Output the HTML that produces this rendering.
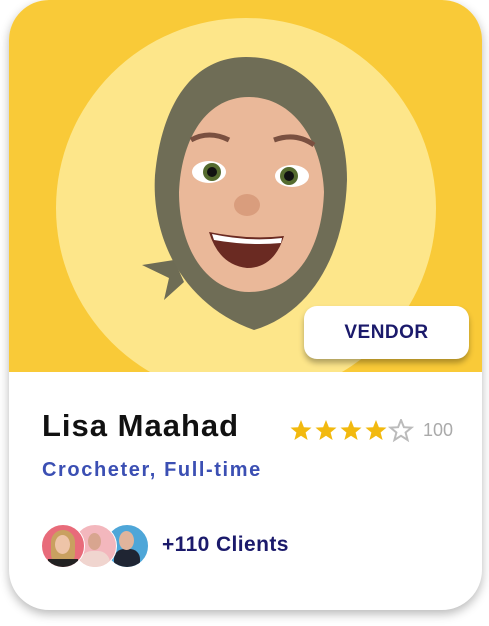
<!DOCTYPE html>
<html><head><meta charset="utf-8"><style>
body{margin:0;width:489px;height:626px;background:#fff;font-family:"Liberation Sans",sans-serif;position:relative;overflow:hidden}
.card{position:absolute;left:9px;top:0;width:473px;height:610px;border-radius:40px;background:#fff;box-shadow:0 4px 10px rgba(0,0,0,.28);overflow:hidden}
.top{position:absolute;left:0;top:0;width:473px;height:372px;background:#f9ca38;overflow:hidden}
.circ{position:absolute;left:47px;top:18px;width:380px;height:380px;border-radius:50%;background:#fde68a}
.vendor{position:absolute;left:295px;top:306px;width:165px;height:53px;border-radius:13px;background:#fff;box-shadow:0 4px 6px rgba(0,0,0,.3);text-align:center;line-height:53px;font-weight:bold;font-size:19px;color:#1b1a6b;letter-spacing:.5px}
.name{position:absolute;left:33px;top:408px;font-size:31px;font-weight:bold;color:#111;letter-spacing:1px}
.sub{position:absolute;left:33px;top:459px;font-size:20px;font-weight:bold;color:#3b4fb3;letter-spacing:1.6px}
.stars{position:absolute;left:281px;top:419px}
.num{position:absolute;left:414px;top:420px;font-size:18px;color:#aaa}
.av{position:absolute;top:524px;width:42px;height:42px;border-radius:50%;border:1px solid #fff;overflow:hidden}
.cl{position:absolute;left:153px;top:533px;font-size:21px;font-weight:bold;color:#1b1a6b;letter-spacing:.4px}
</style></head><body>
<div class="card">
<div class="top"><div class="circ"></div>
<svg width="473" height="372" style="position:absolute;left:0;top:0">
<path d="M133 265 L165 260 L175 282 L155 300 L160 278 Z" fill="#6e6c55"/>
<path d="M237 57 C180 57 152 110 146 175 C142 240 175 305 245 330 C305 312 336 250 338 180 C338 110 300 57 237 57Z" fill="#6f6d56"/>
<path d="M240 97 C195 97 172 142 170 192 C170 252 200 292 240 292 C285 292 313 252 315 192 C313 142 285 97 240 97Z" fill="#eab899"/>
<path d="M182 140 Q200 130 220 140" stroke="#7a5040" stroke-width="5" fill="none"/>
<path d="M265 140 Q287 132 305 145" stroke="#7a5040" stroke-width="5" fill="none"/>
<ellipse cx="200" cy="172" rx="17" ry="11" fill="#fff"/><circle cx="203" cy="172" r="9" fill="#556b2f"/><circle cx="203" cy="172" r="5" fill="#111"/>
<ellipse cx="283" cy="176" rx="17" ry="11" fill="#fff"/><circle cx="280" cy="176" r="9" fill="#556b2f"/><circle cx="280" cy="176" r="5" fill="#111"/>
<ellipse cx="238" cy="205" rx="13" ry="11" fill="#d99d7d"/>
<path d="M200 232 Q240 240 275 236 Q265 268 238 268 Q210 265 200 232Z" fill="#6a2a22"/>
<path d="M203 234 Q240 242 273 238 L272 243 Q240 246 205 240Z" fill="#fff"/>
</svg>
<div class="vendor">VENDOR</div></div>
<div class="name">Lisa Maahad</div>
<div class="sub">Crocheter, Full-time</div>
<svg class="stars" width="125" height="24" viewBox="0 0 125 24">
<defs><path id="s" d="M11 1 L13.9 8.2 L21.5 8.6 L15.6 13.5 L17.6 21 L11 16.8 L4.4 21 L6.4 13.5 L0.5 8.6 L8.1 8.2Z"/></defs>
<use href="#s" x="0" y="0" fill="#f2b90f"/><use href="#s" x="25" y="0" fill="#f2b90f"/><use href="#s" x="50" y="0" fill="#f2b90f"/><use href="#s" x="75" y="0" fill="#f2b90f"/>
<use href="#s" x="100" y="0" fill="none" stroke="#bbb" stroke-width="2"/>
<clipPath id="h"><rect x="100" y="0" width="11" height="24"/></clipPath>
<use href="#s" x="100" y="0" fill="#bbb" clip-path="url(#h)"/>
</svg>
<div class="num">100</div>
<div class="av" style="left:96px;background:#4ea6d8"><div style="position:absolute;left:8px;top:24px;width:26px;height:20px;border-radius:10px 10px 0 0;background:#1f2533"></div><div style="position:absolute;left:13px;top:6px;width:15px;height:19px;border-radius:50%;background:#e0b49c"></div></div>
<div class="av" style="left:64px;background:#f3b7bd"><div style="position:absolute;left:14px;top:8px;width:13px;height:17px;border-radius:50%;background:#d8a58f"></div><div style="position:absolute;left:6px;top:26px;width:30px;height:16px;border-radius:12px 12px 0 0;background:#f0d5cf"></div></div>
<div class="av" style="left:32px;background:#e86b7a"><div style="position:absolute;left:9px;top:5px;width:24px;height:36px;border-radius:12px;background:#c9a060"></div><div style="position:absolute;left:13px;top:10px;width:15px;height:19px;border-radius:50%;background:#eec4a8"></div><div style="position:absolute;left:6px;top:34px;width:30px;height:10px;background:#222"></div></div>
<div class="cl">+110 Clients</div>
</div>
</body></html>
